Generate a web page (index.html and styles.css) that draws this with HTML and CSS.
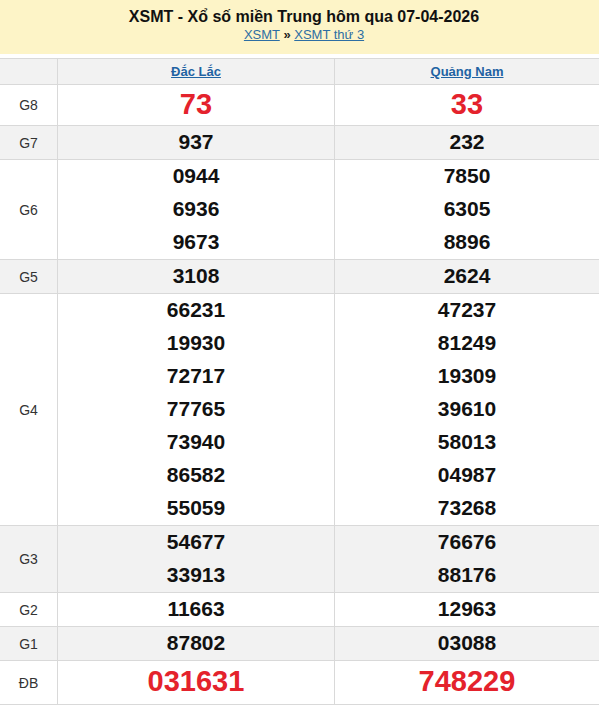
FILE: index.html
```html
<!DOCTYPE html>
<html lang="vi">
<head>
<meta charset="utf-8">
<title>XSMT hôm qua</title>
<link rel="stylesheet" href="styles.css">
</head>
<body>
<div class="head">
  <h1 class="title">XSMT - Xổ số miền Trung hôm qua 07-04-2026</h1>
  <div class="crumbs"><a href="#">XSMT</a> <b>»</b> <a href="#">XSMT thứ 3</a></div>
</div>
<table class="kq">
  <colgroup><col class="c1"><col class="c2"><col class="c3"></colgroup>
  <tr class="hdr"><th></th><th><a href="#">Đắc Lắc</a></th><th><a href="#">Quảng Nam</a></th></tr>
  <tr class="big"><td class="lb">G8</td><td><div class="red">73</div></td><td><div class="red">33</div></td></tr>
  <tr class="alt"><td class="lb">G7</td><td><div>937</div></td><td><div>232</div></td></tr>
  <tr><td class="lb">G6</td><td><div>0944</div><div>6936</div><div>9673</div></td><td><div>7850</div><div>6305</div><div>8896</div></td></tr>
  <tr class="alt"><td class="lb">G5</td><td><div>3108</div></td><td><div>2624</div></td></tr>
  <tr><td class="lb">G4</td><td><div>66231</div><div>19930</div><div>72717</div><div>77765</div><div>73940</div><div>86582</div><div>55059</div></td><td><div>47237</div><div>81249</div><div>19309</div><div>39610</div><div>58013</div><div>04987</div><div>73268</div></td></tr>
  <tr class="alt"><td class="lb">G3</td><td><div>54677</div><div>33913</div></td><td><div>76676</div><div>88176</div></td></tr>
  <tr><td class="lb">G2</td><td><div>11663</div></td><td><div>12963</div></td></tr>
  <tr class="alt"><td class="lb">G1</td><td><div>87802</div></td><td><div>03088</div></td></tr>
  <tr class="db"><td class="lb">ĐB</td><td><div class="red">031631</div></td><td><div class="red">748229</div></td></tr>
</table>
</body>
</html>
```
FILE: styles.css
```css
html, body {
  margin: 0;
  padding: 0;
  background: #fff;
  font-family: "Liberation Sans", Arial, sans-serif;
  color: #000;
}
.head {
  background: #fdf4c7;
  height: 54px;
  box-sizing: border-box;
  padding: 7px 0 0 9px;
  text-align: center;
}
.title {
  margin: 0;
  font-size: 16px;
  line-height: 20px;
  font-weight: bold;
  color: #111;
}
.crumbs {
  font-size: 13px;
  line-height: 16px;
  margin-top: 0;
}
.crumbs a {
  color: #2d6ea3;
  text-decoration: underline;
}
.crumbs b {
  color: #222;
}
.kq {
  margin-top: 4px;
  width: 600px;
  table-layout: fixed;
  border-collapse: separate;
  border-spacing: 0;
  border-top: 1px solid #d9d9d9;
}
.c1 { width: 58px; }
.c2 { width: 277px; }
.c3 { width: 265px; }
.kq th, .kq td {
  padding: 0;
  border-right: 1px solid #d9d9d9;
  border-bottom: 1px solid #d9d9d9;
  text-align: center;
  vertical-align: middle;
}
.kq th {
  height: 25px;
  background: #f2f2f2;
  font-size: 13px;
  font-weight: bold;
}
.kq th a {
  color: #1f63a3;
  text-decoration: underline;
}
.kq td div {
  font-size: 21px;
  font-weight: bold;
  line-height: 33px;
  padding-bottom: 1px;
  margin-top: -1px;
  color: #111;
}
.kq td.lb {
  font-size: 14px;
  color: #333;
}
.alt td { background: #f2f2f2; }
.big td div { line-height: 40px; }
.db td div { line-height: 43px; }
.kq td div.red {
  color: #e4222c;
  font-size: 29px;
}
```
